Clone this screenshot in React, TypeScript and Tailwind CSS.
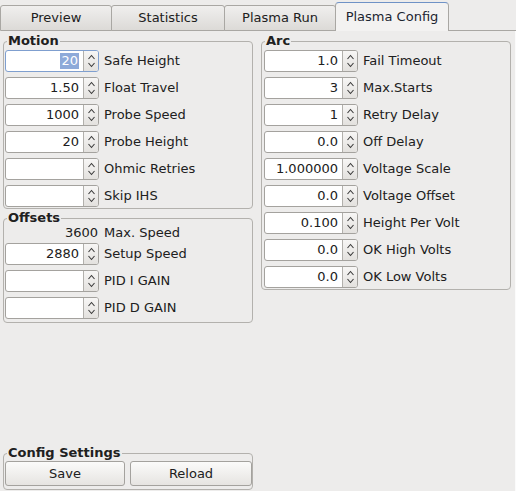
import React from "react";

type Field = {
  value: string;
  label: string;
  focused?: boolean;
};

const motionFields: Field[] = [
  { value: "20", label: "Safe Height", focused: true },
  { value: "1.50", label: "Float Travel" },
  { value: "1000", label: "Probe Speed" },
  { value: "20", label: "Probe Height" },
  { value: "", label: "Ohmic Retries" },
  { value: "", label: "Skip IHS" },
];

const offsetFields: Field[] = [
  { value: "2880", label: "Setup Speed" },
  { value: "", label: "PID I GAIN" },
  { value: "", label: "PID D GAIN" },
];

const arcFields: Field[] = [
  { value: "1.0", label: "Fail Timeout" },
  { value: "3", label: "Max.Starts" },
  { value: "1", label: "Retry Delay" },
  { value: "0.0", label: "Off Delay" },
  { value: "1.000000", label: "Voltage Scale" },
  { value: "0.0", label: "Voltage Offset" },
  { value: "0.100", label: "Height Per Volt" },
  { value: "0.0", label: "OK High Volts" },
  { value: "0.0", label: "OK Low Volts" },
];

const tabs = [
  { name: "Preview", width: "w-[112px]" },
  { name: "Statistics", width: "w-[114px]" },
  { name: "Plasma Run", width: "w-[112px]" },
];

function Spinner() {
  return (
    <div className="flex w-[15px] flex-col items-center justify-center border-l border-[#b2b0ac] bg-gradient-to-b from-[#f7f6f5] to-[#e3e1de]">
      <svg width="9" height="18" viewBox="0 0 9 18" fill="none">
        <path d="M1.5 7 L4.5 3.5 L7.5 7" stroke="#3b3b3b" strokeWidth="1.1" />
        <path d="M1.5 11 L4.5 14.5 L7.5 11" stroke="#3b3b3b" strokeWidth="1.1" />
      </svg>
    </div>
  );
}

function SpinRow({ field }: { field: Field }) {
  return (
    <div className="flex h-[22px] items-center gap-[5px]">
      <div
        className={
          field.focused
            ? "flex h-[22px] w-[94px] shrink-0 overflow-hidden rounded-[3px] border border-[#7f9fcf] bg-white"
            : "flex h-[22px] w-[94px] shrink-0 overflow-hidden rounded-[3px] border border-[#a4a29e] bg-white"
        }
      >
        <div className="flex flex-1 items-center justify-end pr-[4px]">
          {field.focused ? (
            <span className="bg-[#8eaad9] px-px leading-[16px] text-white">
              {field.value}
            </span>
          ) : (
            <span>{field.value}</span>
          )}
        </div>
        <Spinner />
      </div>
      <span className="whitespace-nowrap">{field.label}</span>
    </div>
  );
}

function Group({
  title,
  className,
  children,
}: {
  title: string;
  className?: string;
  children: React.ReactNode;
}) {
  return (
    <fieldset
      className={
        "m-0 min-w-0 rounded-[4px] border border-[#b3b1ad] p-0 " +
        (className ?? "")
      }
    >
      <legend className="ml-[3px] px-px font-bold leading-[16px]">
        {title}
      </legend>
      {children}
    </fieldset>
  );
}

export default function App() {
  return (
    <div className="flex h-[491px] w-[516px] flex-col overflow-hidden bg-[#edeceb] font-['DejaVu_Sans',sans-serif] text-[13px] text-[#202020]">
      <div className="flex h-[31px] shrink-0 items-end">
        {tabs.map((tab, i) => (
          <div
            key={tab.name}
            className={
              "flex h-[26px] items-center justify-center rounded-t-[3px] border border-[#a9a7a3] bg-gradient-to-b from-[#f0efee] to-[#dcdad7] " +
              tab.width +
              (i > 0 ? " -ml-px" : "")
            }
          >
            {tab.name}
          </div>
        ))}
        <div className="-ml-px flex h-[29px] w-[114px] items-center justify-center rounded-t-[4px] border border-b-0 border-[#a9a7a3] border-t-[#6f92c6] bg-[#f3f2f1] pb-px text-[#1c2530]">
          Plasma Config
        </div>
        <div className="h-px flex-1 bg-[#a9a7a3]" />
      </div>

      <div className="flex flex-1 gap-[8px] border-r border-[#fbfbfb] px-[3px] pb-px pt-[2px]">
        <div className="flex w-[250px] flex-col">
          <Group title="Motion" className="w-[250px]">
            <div className="flex flex-col gap-[5px] pb-px pl-px pt-px">
              {motionFields.map((f) => (
                <SpinRow key={f.label} field={f} />
              ))}
            </div>
          </Group>

          <Group title="Offsets" className="mt-px w-[250px]">
            <div className="flex flex-col pb-[3px] pl-px">
              <div className="flex h-[14px] items-center gap-[5px]">
                <span className="w-[94px] pr-px text-right">3600</span>
                <span>Max. Speed</span>
              </div>
              <div className="mt-[3px] flex flex-col gap-[5px]">
                {offsetFields.map((f) => (
                  <SpinRow key={f.label} field={f} />
                ))}
              </div>
            </div>
          </Group>

          <div className="flex-1" />

          <Group title="Config Settings" className="w-[250px]">
            <div className="flex gap-[5px] pb-[3px] pl-px">
              <button
                type="button"
                className="h-[25px] w-[120px] rounded-[3px] border border-[#a4a29e] bg-gradient-to-b from-[#fbfbfa] to-[#e6e4e1]"
              >
                Save
              </button>
              <button
                type="button"
                className="h-[25px] w-[122px] rounded-[3px] border border-[#a4a29e] bg-gradient-to-b from-[#fbfbfa] to-[#e6e4e1]"
              >
                Reload
              </button>
            </div>
          </Group>
        </div>

        <div className="flex w-[250px] flex-col">
          <Group title="Arc" className="w-[250px]">
            <div className="flex flex-col gap-[5px] pb-px pl-[2px] pt-px">
              {arcFields.map((f) => (
                <SpinRow key={f.label} field={f} />
              ))}
            </div>
          </Group>
        </div>
      </div>
    </div>
  );
}
